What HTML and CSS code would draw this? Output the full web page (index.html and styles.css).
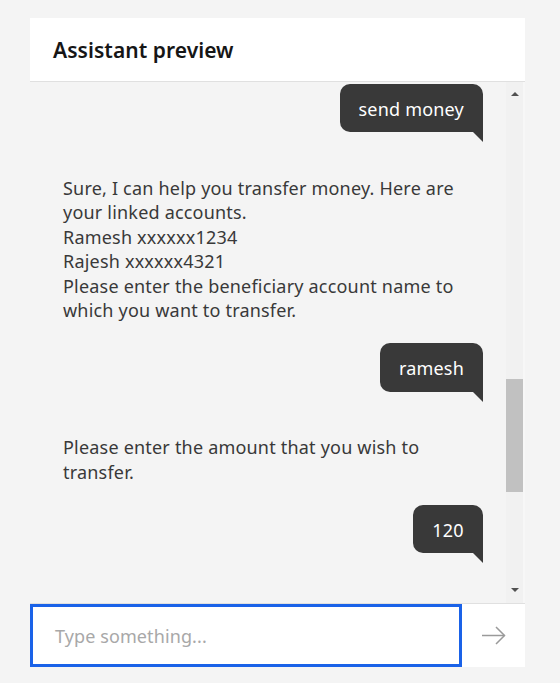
FILE: index.html
```html
<!DOCTYPE html>
<html lang="en">
<head>
<meta charset="utf-8">
<title>Assistant preview</title>
<link rel="stylesheet" href="styles.css">
</head>
<body>
<div class="panel">
  <div class="header">Assistant preview</div>
  <div class="chat">
    <div class="messages">
      <div class="msg-user"><div class="bubble">send money</div></div>
      <div class="msg-bot">Sure, I can help you transfer money. Here are your linked accounts.<br>Ramesh xxxxxx1234<br>Rajesh xxxxxx4321<br>Please enter the beneficiary account name to which you want to transfer.</div>
      <div class="msg-user"><div class="bubble">ramesh</div></div>
      <div class="msg-bot">Please enter the amount that you wish to transfer.</div>
      <div class="msg-user"><div class="bubble">120</div></div>
    </div>
    <div class="scrollbar">
      <div class="sb-btn"><span class="tri-up"></span></div>
      <div class="sb-track"><div class="sb-thumb"></div></div>
      <div class="sb-btn"><span class="tri-down"></span></div>
    </div>
    <div class="edge"></div>
  </div>
  <div class="composer">
    <div class="input">Type something...</div>
    <div class="send">
      <svg width="24" height="19" viewBox="0 0 24 19" fill="none" stroke="#9a9a9a" stroke-width="1.5">
        <path d="M0 9.5 H22.5"/>
        <path d="M14 1 L22.5 9.5 L14 18"/>
      </svg>
    </div>
  </div>
</div>
</body>
</html>
```
FILE: styles.css
```css
html, body { margin: 0; padding: 0; }
body {
  background: #f4f4f4;
  font-family: "Noto Sans", "Open Sans", sans-serif;
  padding: 18px 35px 0 30px;
  height: 683px;
  box-sizing: border-box;
}
.panel {
  width: 495px;
  display: flex;
  flex-direction: column;
}
.header {
  background: #fff;
  height: 63px;
  border-bottom: 1px solid #e0e0e0;
  padding-left: 23px;
  display: flex;
  align-items: center;
  font-size: 21px;
  font-weight: 600;
  color: #161616;
  letter-spacing: 0.05px;
}
.chat {
  height: 521px;
  display: flex;
  background: #f4f4f4;
  overflow: hidden;
}
.messages {
  flex: 1;
  padding: 2px 23px 0 33px;
  display: flex;
  flex-direction: column;
  font-size: 18px;
  line-height: 24.4px;
  letter-spacing: 0.2px;
}
.msg-user {
  display: flex;
  justify-content: flex-end;
  margin-bottom: 43.5px;
}
.bubble {
  position: relative;
  background: #393939;
  color: #fff;
  padding: 13px 19px 11px;
  border-radius: 10px 10px 0 10px;
  min-width: 32px;
  text-align: center;
}
.bubble::after {
  content: "";
  position: absolute;
  right: 0;
  top: 100%;
  border-top: 10px solid #393939;
  border-left: 10px solid transparent;
}
.msg-bot {
  color: #393939;
  width: 402px;
  margin-bottom: 21px;
}
.scrollbar {
  width: 17px;
  background: #f1f1f1;
  display: flex;
  flex-direction: column;
}
.sb-btn {
  height: 17px;
  display: flex;
  align-items: center;
  justify-content: center;
}
.tri-up {
  width: 0; height: 0;
  border-left: 4px solid transparent;
  border-right: 4px solid transparent;
  border-bottom: 4px solid #505050;
  margin-top: 6px;
}
.tri-down {
  width: 0; height: 0;
  border-left: 4px solid transparent;
  border-right: 4px solid transparent;
  border-top: 4px solid #505050;
  margin-bottom: 10px;
}
.sb-track {
  flex: 1;
  display: flex;
  flex-direction: column;
  padding-top: 280px;
}
.sb-thumb {
  height: 113px;
  width: 17px;
  background: #c1c1c1;
}
.edge {
  width: 2px;
  background: #f7f7f7;
}
.composer {
  display: flex;
  height: 63px;
  border-top: 1px solid #e0e0e0;
  background: #fff;
}
.input {
  width: 432px;
  box-sizing: border-box;
  border: 3px solid #1a62e8;
  padding-left: 22px;
  display: flex;
  align-items: center;
  font-size: 18px;
  color: #a8a8a8;
  letter-spacing: 0.1px;
}
.send {
  flex: 1;
  display: flex;
  align-items: center;
  justify-content: center;
}
```
